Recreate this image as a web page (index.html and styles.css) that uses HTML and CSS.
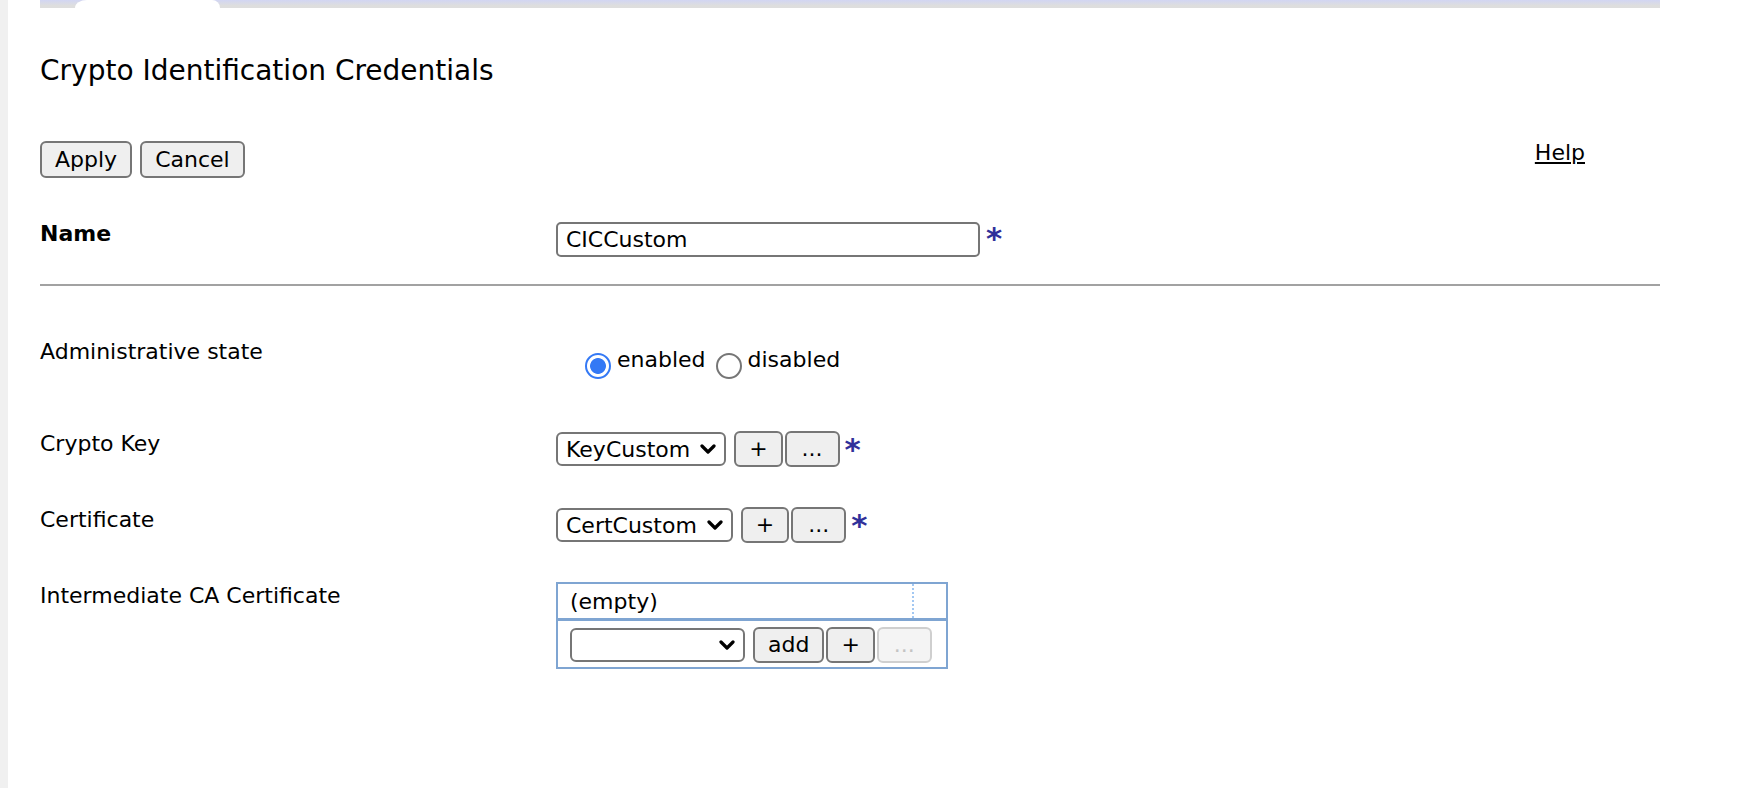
FILE: index.html
```html
<!DOCTYPE html>
<html>
<head>
<meta charset="utf-8">
<title>Crypto Identification Credentials</title>
<link rel="stylesheet" href="styles.css">
</head>
<body>
<div class="page">
  <div class="sidebar"></div>
  <main class="content">
    <div class="tabbar"><div class="tab"></div></div>
    <h1 class="title">Crypto Identification Credentials</h1>
    <div class="toolbar">
      <div class="actions">
        <button class="btn">Apply</button>
        <button class="btn">Cancel</button>
      </div>
      <a class="help" href="#">Help</a>
    </div>

    <div class="row row-name">
      <div class="label label-bold">Name</div>
      <div class="value value-name">
        <input class="text-input" type="text" value="CICCustom">
        <span class="req req-name">*</span>
      </div>
    </div>

    <hr class="sep">

    <div class="row row-admin">
      <div class="label">Administrative state</div>
      <div class="radios">
        <label class="radio"><input type="radio" name="state" checked><span>enabled</span></label>
        <label class="radio"><input type="radio" name="state"><span>disabled</span></label>
      </div>
    </div>

    <div class="row row-key">
      <div class="label">Crypto Key</div>
      <div class="value">
        <div class="select select-key"><span>KeyCustom</span><svg class="chev" width="16" height="10" viewBox="0 0 16 10"><path d="M2 2 L8 8 L14 2" fill="none" stroke="#000" stroke-width="3.2" stroke-linecap="round" stroke-linejoin="round"/></svg></div>
        <button class="btn btn-plus">+</button>
        <button class="btn btn-dots">...</button>
        <span class="req">*</span>
      </div>
    </div>

    <div class="row row-cert">
      <div class="label">Certificate</div>
      <div class="value">
        <div class="select select-cert"><span>CertCustom</span><svg class="chev" width="16" height="10" viewBox="0 0 16 10"><path d="M2 2 L8 8 L14 2" fill="none" stroke="#000" stroke-width="3.2" stroke-linecap="round" stroke-linejoin="round"/></svg></div>
        <button class="btn btn-plus">+</button>
        <button class="btn btn-dots">...</button>
        <span class="req">*</span>
      </div>
    </div>

    <div class="row row-inter">
      <div class="label">Intermediate CA Certificate</div>
      <div class="multi">
        <div class="multi-list">
          <div class="multi-item">(empty)</div>
          <div class="multi-side"></div>
        </div>
        <div class="multi-add">
          <div class="select select-empty"><svg class="chev" width="16" height="10" viewBox="0 0 16 10"><path d="M2 2 L8 8 L14 2" fill="none" stroke="#000" stroke-width="3.2" stroke-linecap="round" stroke-linejoin="round"/></svg></div>
          <button class="btn btn-add">add</button>
          <button class="btn btn-plus btn-tight">+</button>
          <button class="btn btn-dots btn-tight" disabled>...</button>
        </div>
      </div>
    </div>
  </main>
</div>
</body>
</html>
```

FILE: styles.css
```css
* {
  box-sizing: border-box;
}

body {
  margin: 0;
  font-family: "DejaVu Sans", Verdana, sans-serif;
  font-size: 22px;
  color: #000;
  background: #fff;
}

.page {
  display: flex;
  min-height: 788px;
}

.sidebar {
  width: 8px;
  flex: none;
  background: #f0f0f0;
}

.content {
  width: 1620px;
  margin-left: 32px;
}

.tabbar {
  height: 8px;
  display: flex;
  background: linear-gradient(#d2d6f3, #dedede 70%);
}

.tab {
  margin-left: 35px;
  width: 145px;
  height: 8px;
  background: #fff;
  border-radius: 12px 8px 0 0 / 8px 8px 0 0;
}

.title {
  margin: 46px 0 0;
  font-size: 28px;
  font-weight: normal;
  line-height: 34px;
}

.toolbar {
  margin-top: 53px;
  display: flex;
  justify-content: space-between;
  align-items: flex-start;
}

.actions {
  display: flex;
  gap: 8px;
}

.btn {
  font: inherit;
  height: 36px;
  padding: 0 12px;
  border: 2px solid #767676;
  border-radius: 6px;
  background: #efefef;
  color: #000;
  line-height: 30px;
}

.actions .btn {
  height: 37px;
  padding: 0 13px;
}

.help {
  margin-right: 75px;
  margin-top: -1px;
  color: #000;
  line-height: 26px;
  text-decoration: underline;
}

.row {
  display: flex;
  align-items: flex-start;
}

.label {
  width: 516px;
  flex: none;
  line-height: 26px;
}

.label-bold {
  font-weight: bold;
}

.value {
  display: flex;
  align-items: center;
  height: 36px;
}

.row-name {
  margin-top: 43px;
}

.value-name {
  margin-top: 1px;
  height: 35px;
}

.text-input {
  font: inherit;
  color: #000;
  width: 424px;
  height: 35px;
  border: 2px solid #767676;
  border-radius: 5px;
  padding: 0 8px;
  background: #fff;
}

.req {
  align-self: flex-start;
  margin-top: 3px;
  margin-left: 5px;
  font-size: 31px;
  line-height: 30px;
  color: #30309a;
  font-weight: bold;
}

.req-name {
  margin-left: 6px;
  margin-top: 1px;
}

.sep {
  margin: 27px 0 0;
  border: 0;
  height: 2px;
  background: #a2a2a2;
}

.row-admin {
  margin-top: 53px;
}

.radios {
  display: flex;
  padding-left: 29px;
  padding-top: 8px;
}

.radio {
  display: inline-flex;
  align-items: flex-start;
  line-height: 26px;
  margin-right: 10px;
}

.radio input {
  appearance: none;
  -webkit-appearance: none;
  width: 26px;
  height: 26px;
  margin: 6px 6px 0 0;
  border: 2px solid #767676;
  border-radius: 50%;
  background: #fff;
}

.radio input:checked {
  border-color: #3479f5;
  background: radial-gradient(circle, #3479f5 0 7.5px, #fff 8.3px);
}

.row-key {
  margin-top: 52px;
}

.row-cert {
  margin-top: 40px;
}

.row-inter {
  margin-top: 40px;
}

.select {
  display: flex;
  align-items: center;
  height: 34px;
  padding: 0 8px 0 8px;
  gap: 10px;
  border: 2px solid #767676;
  border-radius: 6px;
  background: #fff;
  margin-right: 8px;
  white-space: nowrap;
}

.select-empty {
  width: 175px;
  justify-content: flex-end;
}

.chev {
  flex: none;
}

.btn-plus {
  padding: 0 13px;
  margin-right: 2px;
}

.btn-dots {
  padding: 0 15px;
}

.btn-add {
  padding: 0 13px;
  margin-right: 2px;
}

.btn-tight {
  margin-right: 2px;
}

.btn:disabled {
  color: #c4c4c4;
  border-color: #cfcfcf;
  background: #f4f4f4;
}

.multi {
  width: 392px;
  margin-top: -1px;
  border: 2px solid #7fa5d2;
}

.multi-list {
  display: flex;
  height: 37px;
  border-bottom: 3px solid #7fa5d2;
}

.multi-item {
  flex: 1;
  padding-left: 12px;
  line-height: 36px;
}

.multi-side {
  width: 34px;
  border-left: 2px dotted #a3c8f2;
}

.multi-add {
  display: flex;
  align-items: center;
  padding: 6px 12px 4px;
}
```
